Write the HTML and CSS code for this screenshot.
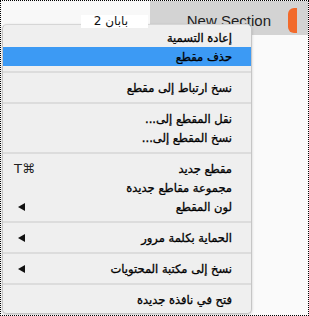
FILE: index.html
```html
<!DOCTYPE html>
<html lang="ar">
<head>
    <meta charset="UTF-8">
    <meta name="viewport" content="width=device-width, initial-scale=1.0">
    <title>Section Menu</title>
    <link rel="stylesheet" href="styles.css">
</head>
<body>
    <div class="frame">

        <!-- Section tabs -->
        <div class="topbar">
            <div class="spacer"></div>
            <div class="tab">
                <span class="tab-name">New Section</span>
                <span class="marker"></span>
            </div>
        </div>

        <div class="page-label" dir="rtl">بابان 2</div>

        <!-- Context menu -->
        <ul class="menu">
            <li class="item"><span class="label">إعادة التسمية</span></li>
            <li class="item active"><span class="label">حذف مقطع</span></li>
            <li class="sep"></li>
            <li class="item"><span class="label">نسخ ارتباط إلى مقطع</span></li>
            <li class="sep"></li>
            <li class="item"><span class="label">نقل المقطع إلى...</span></li>
            <li class="item"><span class="label">نسخ المقطع إلى...</span></li>
            <li class="sep"></li>
            <li class="item"><span class="shortcut">T⌘</span><span class="label">مقطع جديد</span></li>
            <li class="item"><span class="label">مجموعة مقاطع جديدة</span></li>
            <li class="item"><span class="arrow"></span><span class="label">لون المقطع</span></li>
            <li class="sep"></li>
            <li class="item"><span class="arrow"></span><span class="label">الحماية بكلمة مرور</span></li>
            <li class="sep"></li>
            <li class="item"><span class="arrow"></span><span class="label">نسخ إلى مكتبة المحتويات</span></li>
            <li class="sep"></li>
            <li class="item"><span class="label">فتح في نافذة جديدة</span></li>
        </ul>

    </div>
</body>
</html>
```

FILE: styles.css
```css
/* General */
body {
    margin: 0;
    font-family: "DejaVu Sans", sans-serif;
    background: #fff;
}

.frame {
    position: relative;
    width: 309px;
    height: 316px;
    box-sizing: border-box;
    border: 1px dotted #000;
    background: #fafafa;
    overflow: hidden;
}

/* Top bar with section tab */
.topbar {
    display: flex;
    height: 34px;
}

.spacer {
    flex: 1;
    background: #f8f8f8;
}

.tab {
    width: 158px;
    background: #d3d3d3;
    display: flex;
    align-items: center;
    justify-content: flex-end;
}

.tab-name {
    font-family: "Liberation Sans", Arial, sans-serif;
    font-size: 15px;
    color: #1e1e1e;
    margin-right: 17px;
    margin-top: 4px;
}

.marker {
    flex: none;
    width: 9px;
    height: 25px;
    background: #f26a2b;
    border-radius: 6px 0 0 6px;
    margin-right: 11px;
    margin-top: 4px;
}

.page-label {
    position: absolute;
    left: 80px;
    top: 14px;
    width: 67px;
    height: 13px;
    box-sizing: border-box;
    padding-right: 20px;
    text-align: right;
    background: #fff;
    font-size: 12px;
    line-height: 12px;
    color: #111;
    z-index: 2;
}

/* Context menu */
.menu {
    position: absolute;
    left: 1px;
    top: 23px;
    width: 250px;
    box-sizing: border-box;
    margin: 0;
    padding: 3px 0 4px;
    list-style: none;
    background: #efefef;
    border: 1px solid #c6c6c6;
    border-top-color: #d6d6d6;
    border-radius: 5px;
    box-shadow: 0 1px 3px rgba(0, 0, 0, 0.18);
    z-index: 1;
}

.item {
    display: flex;
    align-items: center;
    height: 19px;
    padding: 0 19px 0 10px;
    font-size: 11.5px;
    color: #000;
    white-space: nowrap;
}

.label {
    margin-left: auto;
    direction: rtl;
    -webkit-text-stroke: 0.3px #000;
}

.item.active {
    background: #3c9af4;
}

.sep {
    height: 2px;
    margin: 5px 0;
    background: #dcdcdc;
}

.shortcut {
    font-size: 13px;
    color: #222;
    margin-left: 1px;
}

.arrow {
    width: 0;
    height: 0;
    margin-left: 5px;
    border-top: 4.5px solid transparent;
    border-bottom: 4.5px solid transparent;
    border-right: 7px solid #111;
}
```
